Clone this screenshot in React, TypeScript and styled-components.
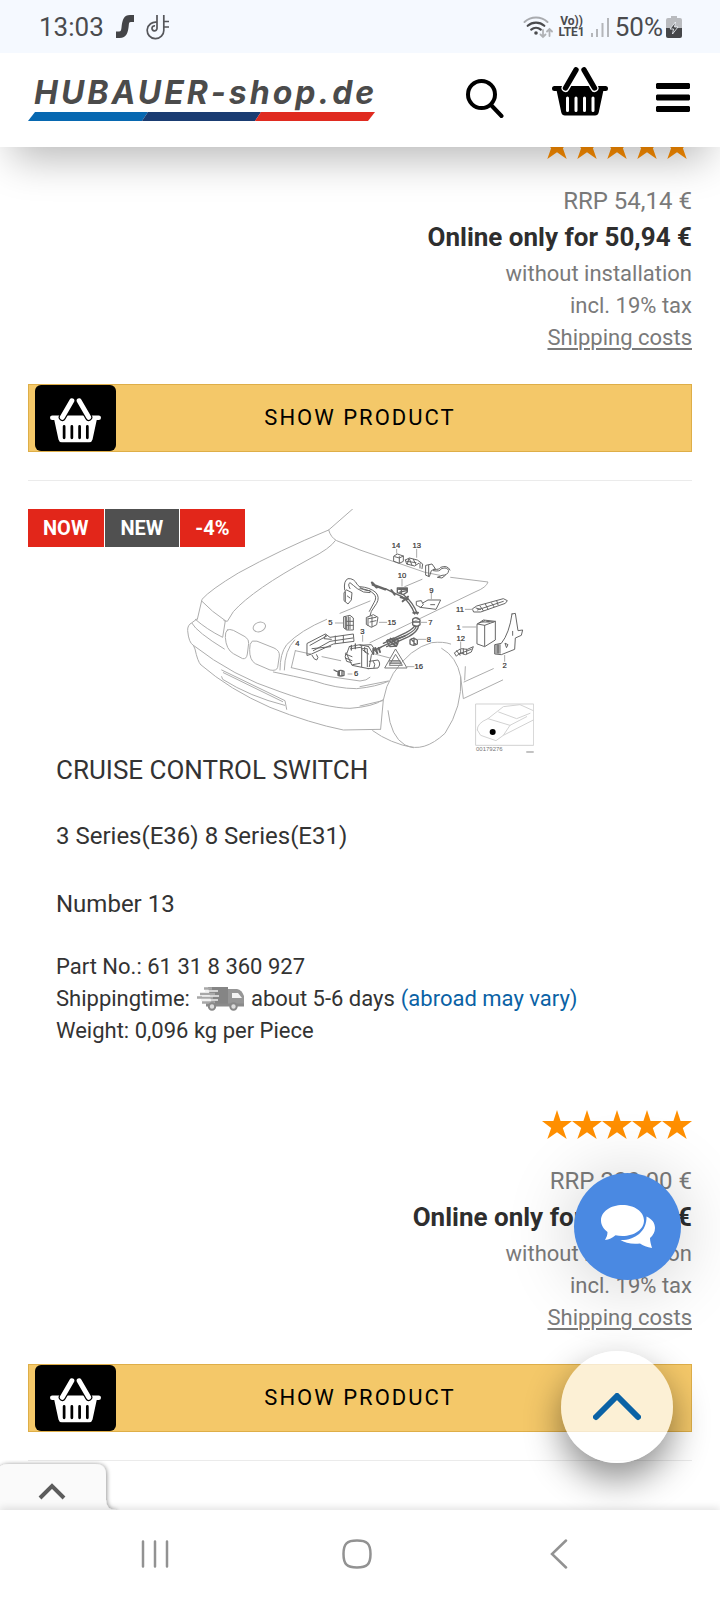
import React from 'react';
import styled, { createGlobalStyle } from 'styled-components';

const GlobalStyle = createGlobalStyle`
  *, *::before, *::after { box-sizing: border-box; }
  body {
    margin: 0;
    background: #fff;
    font-family: Roboto, "Liberation Sans", sans-serif;
    color: #333;
  }
  button { font: inherit; color: inherit; padding: 0; border: 0; background: none; cursor: pointer; }
  h2, p { margin: 0; font-weight: 400; }
  svg { display: block; flex: none; }
`;

const Screen = styled.div`
  display: flex;
  flex-direction: column;
  min-height: 100vh;
  overflow: hidden;
`;

const StatusBar = styled.div`
  display: flex;
  align-items: center;
  justify-content: space-between;
  height: 53px;
  padding: 0 38px 0 39px;
  background: #f5f9ff;
  color: #4a4b4e;
  font-size: 26px;
  line-height: 32px;
  position: relative;
  z-index: 3;
`;

const StatusGroup = styled.div<{ $gap: number }>`
  display: flex;
  align-items: center;
  gap: ${({ $gap }) => $gap}px;
`;

const VoLte = styled.span`
  font-size: 12px;
  line-height: 11px;
  font-weight: 700;
  text-align: center;
`;

const Header = styled.header`
  display: flex;
  align-items: center;
  justify-content: space-between;
  height: 94px;
  padding: 0 30px 5px 28px;
  background: #fff;
  box-shadow: 0 24px 40px -12px rgba(0, 0, 0, 0.28);
  position: relative;
  z-index: 2;
`;

const Logo = styled.a`
  display: flex;
  flex-direction: column;
  gap: 1px;
  color: #4b4b4b;
  text-decoration: none;
`;

const LogoText = styled.span`
  padding-left: 6px;
  font-family: Inter, Roboto, sans-serif;
  font-size: 32px;
  line-height: 36px;
  font-weight: 700;
  font-style: italic;
  letter-spacing: 3px;
`;

const HeaderActions = styled.nav`
  display: flex;
  align-items: center;
  gap: 48px;
`;

const BasketButton = styled.button`
  padding-bottom: 12px;
  && { color: #000; }
`;

const Main = styled.main`
  flex: 1;
  position: relative;
  padding: 0 28px 49px;
`;

const Product = styled.article<{ $scrolled?: boolean }>`
  margin-top: ${({ $scrolled }) => ($scrolled ? '-17px' : '28px')};
  padding-bottom: 28px;
  border-bottom: 1px solid #ebebeb;
`;

const Media = styled.div`
  position: relative;
  display: flex;
  justify-content: center;
`;

const Badges = styled.div`
  position: absolute;
  top: 0;
  left: 0;
  display: flex;
  gap: 1px;
`;

const Badge = styled.span<{ $dark?: boolean }>`
  padding: 0 16px 0 15px;
  background: ${({ $dark }) => ($dark ? '#505050' : '#e2261a')};
  color: #fff;
  font-size: 20px;
  line-height: 38px;
  font-weight: 700;
`;

const Info = styled.div`
  display: flex;
  flex-direction: column;
  gap: 32px;
  padding: 0 28px 63px;
`;

const Title = styled.h2`
  font-size: 26px;
  line-height: 32px;
`;

const Line = styled.p`
  font-size: 24px;
  line-height: 36px;
`;

const Details = styled.div`
  margin-top: -3px;
  font-size: 22px;
  line-height: 32px;
`;

const DetailRow = styled.p`
  display: flex;
  align-items: center;
  gap: 6px;
`;

const InfoLink = styled.a`
  color: #0a62a5;
  text-decoration: none;
`;

const Offer = styled.div`
  display: flex;
  flex-direction: column;
  align-items: flex-end;
  color: #7a7a7a;
  font-size: 22px;
  line-height: 32px;
`;

const Stars = styled.div`
  display: flex;
  margin-bottom: 24px;
`;

const Rrp = styled.p`
  font-size: 24px;
  line-height: 36px;
`;

const Price = styled.p`
  margin-bottom: 3px;
  color: #2e2e2e;
  font-size: 26px;
  line-height: 36px;
  font-weight: 700;
`;

const ShippingLink = styled.a`
  color: inherit;
  text-decoration: underline;
  text-decoration-thickness: 2px;
  text-underline-offset: 3px;
`;

const ShowButton = styled.button`
  display: grid;
  grid-template-columns: 81px 1fr 81px;
  align-items: center;
  width: 100%;
  height: 68px;
  margin-top: 30px;
  padding: 0 6px;
  border: 1px solid #deae48;
  background: #f4c869;
  color: #000;
  font-size: 22px;
  line-height: 32px;
  letter-spacing: 2px;
`;

const BasketTile = styled.span`
  display: flex;
  align-items: center;
  justify-content: center;
  height: 66px;
  padding-top: 4px;
  border-radius: 6px;
  background: #000;
  color: #fff;
`;

const ChatButton = styled.button`
  position: absolute;
  right: 39px;
  bottom: 230px;
  display: grid;
  place-items: center;
  width: 107px;
  height: 107px;
  border-radius: 50%;
  background: #4a89e2;
  box-shadow: 0 4px 72px rgba(0, 0, 0, 0.2);
`;

const TopButton = styled.button`
  position: absolute;
  right: 47px;
  bottom: 47px;
  display: grid;
  place-items: center;
  width: 112px;
  height: 112px;
  border-radius: 50%;
  background: rgba(255, 255, 255, 0.72);
  box-shadow: 0 16px 36px rgba(0, 0, 0, 0.45);
`;

const DrawerTab = styled.button`
  position: absolute;
  left: 0;
  bottom: 0;
`;

const SystemNav = styled.nav`
  display: grid;
  grid-template-columns: repeat(3, 1fr);
  place-items: center;
  height: 90px;
  padding: 0 60px 2px 54px;
  background: #fff;
  box-shadow: 0 -2px 8px rgba(0, 0, 0, 0.12);
  position: relative;
`;

function Basket({ width, ground }: { width: number; ground: string }) {
  return (
    <svg width={width} height={Math.round((width * 49) / 56)} viewBox="0 0 56 49" fill="none" strokeLinecap="round">
      <path
        d="M2.5 19h51a2.5 2.5 0 0 1 0 5h-2.2l-4.6 21.4A4 4 0 0 1 43 48.500H13a4 4 0 0 1-3.700-3.100L4.700 24H2.500a2.500 2.500 0 0 1 0-5z"
        fill="currentColor"
      />
      <path d="M15.500 31v12.500M24 31v12.500M32.500 31v12.500M41 31v12.500" stroke={ground} strokeWidth="3" />
      <path d="M24 2.800 13.500 21M32 2.800 42.500 21" stroke={ground} strokeWidth="8" />
      <path d="M24 2.800 13.500 21M32 2.800 42.500 21" stroke="currentColor" strokeWidth="5.400" />
    </svg>
  );
}

function StarRow() {
  return (
    <Stars role="img" aria-label="5 out of 5 stars">
      {[0, 1, 2, 3, 4].map((n) => (
        <svg key={n} width="30" height="29" viewBox="0 0 30 29">
          <path d="M15 0l3.600 11H30l-9.200 6.900L24.700 29 15 22.200 5.300 29l3.900-11.100L0 11h11.400z" fill="#ff8f00" />
        </svg>
      ))}
    </Stars>
  );
}

function OfferBox({ rrp, price }: { rrp: string; price: string }) {
  return (
    <>
      <Offer>
        <StarRow />
        <Rrp>RRP {rrp} €</Rrp>
        <Price>Online only for {price} €</Price>
        <p>without installation</p>
        <p>incl. 19% tax</p>
        <ShippingLink href="#shipping">Shipping costs</ShippingLink>
      </Offer>
      <ShowButton type="button">
        <BasketTile>
          <Basket width={51} ground="#000" />
        </BasketTile>
        SHOW PRODUCT
      </ShowButton>
    </>
  );
}

function PartLabel({ x, y, children }: { x: number; y: number; children: string }) {
  return (
    <text x={x} y={y} fontSize="23" fontFamily="Liberation Sans, sans-serif" fill="#333" stroke="#333" strokeWidth="0.600" textAnchor="middle">
      {children}
    </text>
  );
}

function CarDiagram() {
  return (
    <svg width="348" height="245" viewBox="0 0 348 245" fill="none" strokeLinejoin="round" strokeLinecap="round">
      {/* front of the car: bonnet, grille, bumper */}
      <g transform="translate(-16 -9) scale(0.33333)" stroke="#adadad" strokeWidth="3">
        <path d="M548 27L476 90Q330 150 205 219 120 270 96 298L82 358M476 90Q482 112 500 122L570 150 765 217 810 226M842 232L954 246Q950 262 915 276L600 428" />
        <path d="M496 122Q480 146 420 176 250 268 190 335L172 364 162 362M96 304Q125 335 166 362L158 412Q110 388 76 358M82 356L66 368Q52 375 53 392 56 428 70 436L75 447Q83 485 92 494" />
        <path d="M66 370Q80 396 163 447M172 390Q165 396 166 412 168 448 190 461L218 476Q230 478 232 462L236 430Q238 418 225 410L190 391Q178 386 172 390zM246 424Q238 430 239 448 238 480 256 491L300 510Q320 514 323 502L328 468Q330 452 312 444L262 424z" />
        <ellipse cx="268" cy="381" rx="19" ry="14" transform="rotate(-20 268 381)" />
        <path d="M330 510Q330 460 350 434 390 392 470 358M510 340L600 303M343 510Q344 450 374 420M376 452L364 503M376 452L422 462M364 503L480 530 570 543Q590 542 600 532" />
        <path d="M70 436Q190 530 330 575 470 625 540 625 610 620 638 600M310 516Q370 528 430 542 500 566 560 566 620 560 655 544M92 494Q180 570 300 622 420 670 520 690L632 688" />
        <path d="M155 510L345 602 350 628M160 518L338 605M155 530L158 538Q240 590 344 616" />
      </g>
      <g transform="translate(174 -9) scale(0.33333)" stroke="#adadad" strokeWidth="3">
        <path d="M0 560L85 543M0 618L68 602M62 686L70 600Q76 560 100 520 150 445 215 428 250 424 272 432M245 445Q290 470 302 530 308 620 255 700 190 760 135 735 92 710 84 632M38 692Q90 730 160 743M302 530L310 596 428 540M312 546L400 506M316 500L314 540" />
      </g>
      {/* control unit, bracket and harness on the left */}
      <g transform="translate(-16 -9) scale(0.33333)" stroke="#666" strokeWidth="3">
        <path d="M524 270Q520 242 534 236 552 234 562 254 580 274 600 272M540 266Q532 252 540 248 550 256 562 266 580 280 600 278M522 280L522 302 534 312 544 300 546 278 530 270zM532 288L540 294M526 276V304" />
        <path d="M522 350L540 346 550 354 550 390 530 390 522 384zM530 352V388M540 352V386M530 364H549M530 376H549M526 350V386M535 350V388" />
        <path d="M412 430L466 402 480 412 550 402 552 424 490 432 425 462 412 466zM420 436L470 408M426 446L482 440M430 452L480 424 548 414M426 466Q432 480 440 480 448 474 440 464M468 404L462 416 484 418M496 408V430M520 406V428" />
        <path d="M538 440L570 434 596 440M538 440L530 462 546 496 596 506M526 462L546 470M526 474L546 482M575 438V500M542 446L572 442M548 494L570 490M528 458Q522 470 530 484L544 488M584 442V456L596 462" />
        <path d="M504 514Q512 508 522 514V526Q512 530 504 526zM508 514V526M516 513V527M492 510L500 514M544 436V450M556 432V446" strokeWidth="4" />
      </g>
      {/* cables and small parts on the right */}
      <g transform="translate(174 -9) scale(0.33333)" stroke="#666" strokeWidth="3">
        <path d="M0 260Q30 262 48 278 60 292 50 310L34 334 30 348M0 266Q28 268 42 282 52 292 42 308L28 334M20 352L40 344 54 352 50 374 34 382 20 374zM26 356L48 352M30 366L48 362M24 354V376M36 350V380" />
        <path d="M36 248L50 262M38 254L76 268" strokeWidth="7" />
        <path d="M76 266L100 278 126 290Q152 308 164 342M132 286Q160 308 172 342M168 378Q170 388 142 404L74 436 40 452M164 376Q164 384 138 398L70 430M176 376Q174 394 146 410L80 440" strokeWidth="4" />
        <path d="M94 270L104 284M122 292L144 298M128 304L144 290M160 338H174M84 420L108 438M92 416L112 432M56 444L60 456M46 444L52 460M40 446V462" strokeWidth="6" />
        <path d="M112 264H142V276L130 284 112 278zM124 264V280M116 268H142M120 276L140 272" strokeWidth="4" />
        <path d="M158 358Q168 348 180 360V374Q168 384 158 374zM160 366H178M80 422L100 414 116 422 110 438 90 440zM100 420L135 408" strokeWidth="4" />
        <path d="M150 420Q158 410 172 420V432Q160 440 150 432zM154 418L168 434M162 414V436" strokeWidth="4" />
        <path d="M170 304L184 302 190 314 182 322 170 316zM190 308L204 300 242 300 228 328 180 322M212 314H224" />
        <path d="M102 168L112 162 130 168V184L118 190 102 184zM118 170V188M104 170L118 174 130 168M136 180L148 174 172 180 188 192 186 206M136 180L140 192 164 198 176 190M148 176L156 196M140 184L168 188M146 178L142 192M160 178L168 194M180 190V204" />
        <path d="M198 196L216 192 226 206 214 212 208 230 198 226zM206 196V228M220 212Q240 216 244 206 262 200 266 212 264 226 246 226L232 232 246 234 256 226M222 208Q238 210 242 202 262 194 270 210" />
        <path d="M338 326L350 318 430 296 442 302 436 310 362 336 342 336zM360 318L370 332M376 312L384 328M394 308L402 320M348 324L362 328M352 330L430 304M410 302L414 314" />
        <path d="M352 372L370 360 406 364V420L374 440 352 432zM352 372L374 376 406 364M374 376V438M366 366H388M356 370L374 362M380 364L400 366" />
        <path d="M456 342L466 340 474 392 488 390 484 406 466 414 464 448 424 464 404 462 404 434 424 430Q448 400 456 342zM408 436V460M412 434V460M416 434V460M420 434V460M436 430L444 434 440 442zM458 394V406" />
        <path d="M284 458L302 446 322 448 340 440 334 456 316 464 300 458 290 468zM302 448V462M320 448V462M290 452L300 466M310 446V462M296 462L334 448" />
        <path d="M106 448L74 504H140zM106 464L88 496H126zM88 482H120M88 486H122M88 490H122" stroke="#777" />
        <path d="M0 436L34 434 44 448 34 466 28 500M4 446H22V500M28 484L54 480Q64 492 54 504L24 506M46 454L64 442M8 450L18 456M26 440L38 460M40 484Q48 492 42 504" />
      </g>
      {/* leader lines */}
      <g transform="translate(174 -9) scale(0.33333)" stroke="#aaa" strokeWidth="3">
        <path d="M110 148V160M170 148V172M126 238V258M214 280V298M182 367H200M174 418H198M58 367H80M308 381H350M316 328H338M302 426V446M434 466V484M138 500H162M44 462L90 474M8 406V424M134 260L186 238M-74 369H-52M-36 522H-24M-114 470L-58 482" />
      </g>
      <g transform="translate(174 -9) scale(0.33333)">
        <PartLabel x={108} y={144}>14</PartLabel>
        <PartLabel x={170} y={144}>13</PartLabel>
        <PartLabel x={126} y={234}>10</PartLabel>
        <PartLabel x={214} y={278}>9</PartLabel>
        <PartLabel x={300} y={336}>11</PartLabel>
        <PartLabel x={296} y={389}>1</PartLabel>
        <PartLabel x={302} y={422}>12</PartLabel>
        <PartLabel x={434} y={504}>2</PartLabel>
        <PartLabel x={211} y={375}>7</PartLabel>
        <PartLabel x={207} y={426}>8</PartLabel>
        <PartLabel x={95} y={375}>15</PartLabel>
        <PartLabel x={176} y={507}>16</PartLabel>
        <PartLabel x={7} y={401}>3</PartLabel>
        <PartLabel x={-89} y={375}>5</PartLabel>
        <PartLabel x={-188} y={437}>4</PartLabel>
        <PartLabel x={-12} y={529}>6</PartLabel>
      </g>
      {/* locator thumbnail */}
      <g transform="translate(174 -9) scale(0.33333)" stroke="#d2d2d2" strokeWidth="3">
        <path d="M348 612H521V736H348z" />
        <path d="M352 690Q350 670 384 656L430 620 480 614 520 632M352 690L362 706 408 722 430 706 520 660M384 656L450 676 500 650M416 636L470 656 510 640M430 706L450 676" />
        <circle cx="398" cy="696" r="9" fill="#000" stroke="none" />
        <path d="M500 756H520" stroke="#888" />
        <text x="348" y="753" fontSize="18" fontFamily="Liberation Sans, sans-serif" fill="#777" stroke="none">00179276</text>
      </g>
    </svg>
  );
}

function Truck() {
  return (
    <svg width="49" height="24" viewBox="0 0 49 24">
      <path d="M12 0h20v18H16z" fill="#858585" />
      <path d="M32 2h9q5 1 7 7v10H32z" fill="#969696" />
      <path d="M36 6h6l4 5H36z" fill="#f4f4f4" />
      <path d="M8 1.500h8M4 7h15M1 10.500h16M6 15.500h13" stroke="#a8a8a8" strokeWidth="2.500" />
      <path d="M9 4h13M6 9h17M5 13h17" stroke="#eee" strokeWidth="1.500" />
      <path d="M10 18h38" stroke="#8a8a8a" strokeWidth="3" />
      <circle cx="16" cy="19.500" r="3.200" fill="#ddd" stroke="#888" strokeWidth="2" />
      <circle cx="37.500" cy="19.500" r="3.200" fill="#ddd" stroke="#888" strokeWidth="2" />
    </svg>
  );
}

export default function App() {
  return (
    <Screen>
      <GlobalStyle />
      <StatusBar>
        <StatusGroup $gap={12}>
          <span>13:03</span>
          <svg width="18" height="24" viewBox="0 0 18 24">
            <path d="M18 0v7h-3c-2 0-2 1-2.200 3-.600 7-2 13-9.300 13H0v-6.500h3c2 0 2.200-1.500 2.500-4C6.300 4.500 8 0 14 0z" fill="#444548" />
          </svg>
          <svg width="24" height="26" viewBox="0 0 24 26" fill="none" stroke="#55565a" strokeWidth="1.700">
            <path d="M11 1v13.500a2.500 2.500 0 1 1-2-2.600M11 8.200A8.300 8.300 0 1 0 17.800 16V1M17.800 7.500H23M17.800 13H23" />
          </svg>
        </StatusGroup>
        <StatusGroup $gap={5}>
          <svg width="30" height="24" viewBox="0 0 30 24" fill="none" strokeLinecap="round">
            <path d="M1.500 7a17 17 0 0 1 23 0" stroke="#a9abaf" strokeWidth="2" />
            <path d="M4.700 10.800a12.500 12.500 0 0 1 16.600 0M8.200 14.600a7.500 7.500 0 0 1 9.600 0" stroke="#4a4b4e" strokeWidth="2.200" />
            <circle cx="13" cy="18" r="1.800" fill="#4a4b4e" />
            <path d="M20 15v7m-2.500-2.500L20 22l2.500-2.500M26.500 21v-7M24 16.500l2.500-2.500 2.500 2.500" stroke="#b0b2b6" strokeWidth="1.800" />
          </svg>
          <VoLte>
            Vo))
            <br />
            LTE1
          </VoLte>
          <svg width="20" height="22" viewBox="0 0 20 22" fill="#b4b6ba">
            <path d="M1 17h2v4H1zM6 13h2v8H6zM11.500 7h2v14h-2zM17 2h2v19h-2z" />
          </svg>
          <StatusGroup $gap={3}>
            <span>50%</span>
            <svg width="16" height="22" viewBox="0 0 16 22">
              <path d="M5 0h6v2h3a2 2 0 0 1 2 2v8H0V4a2 2 0 0 1 2-2h3z" fill="#b9bbbf" />
              <path d="M0 12h16v8a2 2 0 0 1-2 2H2a2 2 0 0 1-2-2z" fill="#454649" />
              <path d="M9.500 6L4 13h3.500l-1 5L12 11H8.500z" fill="#454649" stroke="#f5f9ff" strokeWidth=".8" />
            </svg>
          </StatusGroup>
        </StatusGroup>
      </StatusBar>

      <Header>
        <Logo href="#home">
          <LogoText>HUBAUER-shop.de</LogoText>
          <svg width="347" height="9" viewBox="0 0 347 9">
            <path d="M7 0h113l-6 9H0z" fill="#0768b1" />
            <path d="M120 0h113l-6 9H114z" fill="#1a3c72" />
            <path d="M233 0h114l-7 9H227z" fill="#e02b20" />
          </svg>
        </Logo>
        <HeaderActions>
          <button type="button" aria-label="Search">
            <svg width="38" height="40" viewBox="0 0 38 40" fill="none" stroke="#000" strokeLinecap="round">
              <circle cx="15.500" cy="16.500" r="13.500" strokeWidth="4" />
              <path d="M25.500 27.500L35.500 38" strokeWidth="4" />
            </svg>
          </button>
          <BasketButton type="button" aria-label="Basket">
            <Basket width={56} ground="#fff" />
          </BasketButton>
          <button type="button" aria-label="Menu">
            <svg width="34" height="29" viewBox="0 0 34 29">
              <path d="M1 0h32l1 1v4l-1 1H1L0 5V1zM1 11.500h32l1 1v4l-1 1H1l-1-1v-4zM1 23h32l1 1v4l-1 1H1l-1-1v-4z" />
            </svg>
          </button>
        </HeaderActions>
      </Header>

      <Main>
        <Product $scrolled>
          <OfferBox rrp="54,14" price="50,94" />
        </Product>

        <Product>
          <Media>
            <CarDiagram />
            <Badges>
              <Badge>NOW</Badge>
              <Badge $dark>NEW</Badge>
              <Badge>-4%</Badge>
            </Badges>
          </Media>
          <Info>
            <Title>CRUISE CONTROL SWITCH</Title>
            <Line>3 Series(E36) 8 Series(E31)</Line>
            <Line>Number 13</Line>
            <Details>
              <p>Part No.: 61 31 8 360 927</p>
              <DetailRow>
                <span>Shippingtime:</span>
                <Truck />
                <span>about 5-6 days</span>
                <InfoLink href="#shipping">(abroad may vary)</InfoLink>
              </DetailRow>
              <p>Weight: 0,096 kg per Piece</p>
            </Details>
          </Info>
          <OfferBox rrp="209,00" price="200,64" />
        </Product>

        <ChatButton type="button" aria-label="Chat">
          <svg width="54" height="44" viewBox="0 0 54 44" fill="#fff">
            <path d="M45.500 11.500C51 14 54 18 54 23c0 4-2 7.500-5 10 0 3.500 1 6.500 2 10-5-1-9-2.500-12-4.500-8 1-15-.5-19.500-3.500C33 35.500 46 27 45.500 11.500z" />
            <path d="M21.500 0C33.500 0 43 6.700 43 15.500S33.500 31 21.500 31c-2.500 0-4.800-.200-7-.800C11.500 33 8 34.500 4 35c1.500-2.500 2.500-5 2.500-8C2.500 24 0 20 0 15.500 0 6.700 9.500 0 21.500 0z" />
          </svg>
        </ChatButton>
        <TopButton type="button" aria-label="Back to top">
          <svg width="48" height="28" viewBox="0 0 48 28" fill="none" stroke="#0a62a5" strokeWidth="6" strokeLinecap="round" strokeLinejoin="round">
            <path d="M3 24L24 3l21 21" />
          </svg>
        </TopButton>
        <DrawerTab type="button" aria-label="Open drawer">
          <svg width="120" height="50" viewBox="0 0 120 50" fill="none">
            <defs>
              <filter id="tabShadow" x="-10%" y="-20%" width="120%" height="140%">
                <feDropShadow dx="1" dy="0" stdDeviation="2" floodColor="#000" floodOpacity="0.4" />
              </filter>
            </defs>
            <path d="M-2 52V8Q2 4 9 4h86q11 0 11 11v25q0 10 10 10v2z" fill="#fafafa" filter="url(#tabShadow)" />
            <path d="M40 38l12-12 12 12" stroke="#5c5c5c" strokeWidth="4" />
          </svg>
        </DrawerTab>
      </Main>

      <SystemNav>
        <button type="button" aria-label="Recent apps">
          <svg width="28" height="28" viewBox="0 0 28 28" stroke="#929292" strokeWidth="2.500" strokeLinecap="round">
            <path d="M2 1.500v25M14 1.500v25M26 1.500v25" />
          </svg>
        </button>
        <button type="button" aria-label="Home">
          <svg width="30" height="30" viewBox="0 0 30 30" fill="none" stroke="#929292" strokeWidth="2.500">
            <path d="M15 1.500c10 0 13.500 3 13.500 13.500S25 28.500 15 28.500 1.500 25.500 1.500 15 5 1.500 15 1.500z" />
          </svg>
        </button>
        <button type="button" aria-label="Back">
          <svg width="18" height="30" viewBox="0 0 18 30" fill="none" stroke="#929292" strokeWidth="2.500" strokeLinecap="round">
            <path d="M16 1.500L2 15l14 13.500" />
          </svg>
        </button>
      </SystemNav>
    </Screen>
  );
}
